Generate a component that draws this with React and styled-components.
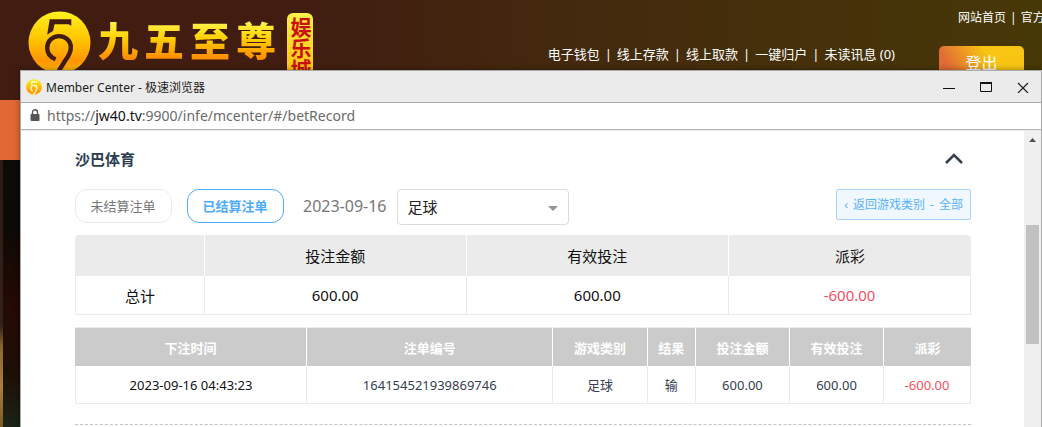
import React from 'react';
import styled, { createGlobalStyle, css } from 'styled-components';

const Global = createGlobalStyle`
  * { box-sizing: border-box; }
  body { margin: 0; font-family: "Noto Sans", "Noto Sans CJK SC", sans-serif; color: #222; }
  button, select { font: inherit; }
  a { color: inherit; text-decoration: none; }
`;

const Site = styled.div`
  position: relative;
  min-height: 100vh;
  overflow: hidden;
  background: #0d0805;
`;
const Header = styled.header`
  display: flex;
  justify-content: space-between;
  height: 100px;
  padding: 11px 0 0 28px;
  background: linear-gradient(90deg, #411d11 0%, #411d11 28%, #43280e 52%, #473807 100%);
`;
const Brand = styled.div`
  display: flex;
  align-items: flex-start;
`;
const BrandName = styled.h1`
  display: flex;
  gap: 6px;
  margin: 0 11px 0 7px;
  font-size: 40px;
  line-height: 60px;
  font-weight: 900;
  span {
    background: linear-gradient(#fff04a 20%, #ffd200 45%, #ff8a00 80%);
    background-clip: text;
    -webkit-background-clip: text;
    color: transparent;
  }
`;
const Seal = styled.div`
  height: 76px;
  margin-top: 2px;
  padding-top: 4px;
  border-radius: 6px;
  background: linear-gradient(#fff04a, #ffb400);
  color: #c8100c;
  font-size: 21px;
  line-height: 26px;
  font-weight: 700;
  writing-mode: vertical-rl;
`;
const HeaderSide = styled.div`
  display: flex;
  flex-direction: column;
  align-items: flex-end;
  color: #fff;
  white-space: nowrap;
`;
const TopLinks = styled.nav`
  display: flex;
  gap: 4px;
  width: 84px;
  height: 35px;
  font-size: 12px;
  line-height: 14px;
`;
const Account = styled.div`
  display: flex;
  align-items: flex-start;
  padding-right: 18px;
`;
const Menu = styled.nav`
  display: flex;
  gap: 5px;
  margin-right: 44px;
  font-size: 13px;
  line-height: 17px;
`;
const Logout = styled.button`
  width: 85px;
  height: 32px;
  padding: 0;
  border: 0;
  border-radius: 5px;
  background: linear-gradient(60deg, #e06a35 15%, #f8c512 60%);
  color: #fff;
  font-size: 16px;
`;
const Banner = styled.div`
  height: 60px;
  background: #e06935;
`;
const Scene = styled.div`
  display: flex;
  height: 267px;
  background: linear-gradient(#0d0b08 0%, #0d0906 25%, #260a04 55%, #1d0f06 80%, #1a2416 100%);
`;
const SceneEdge = styled.div`
  width: 3px;
  background: linear-gradient(#2a1b14 0%, #33221a 62%, #8a6630 70%, #a87f3a 85%, #7a5a22 100%);
`;

const Window = styled.section`
  position: absolute;
  inset: 70px 0 0 20px;
  display: flex;
  flex-direction: column;
  border: solid #a9a9a9;
  border-width: 1px 1px 0 1px;
  background: #fff;
  box-shadow: 0 0 6px rgba(0, 0, 0, 0.4);
`;
const TitleBar = styled.div`
  display: flex;
  align-items: center;
  height: 32px;
  padding: 0 6px 0 5px;
  border-bottom: 1px solid #ababab;
  background: #ebebeb;
  font-size: 12px;
`;
const WindowTitle = styled.span`
  flex: 1;
  margin-left: 4px;
`;
const WindowButton = styled.button`
  display: flex;
  align-items: center;
  justify-content: center;
  width: 24px;
  height: 24px;
  margin-left: 13px;
  padding: 0;
  border: 0;
  background: none;
`;
const AddressBar = styled.div`
  display: flex;
  align-items: center;
  gap: 7px;
  height: 27px;
  padding: 0 0 2px 9px;
  border-bottom: 1px solid #b5b5b5;
  color: #6b6b6b;
  font-size: 14px;
  b { color: #111; font-weight: 400; }
`;
const View = styled.div`
  display: flex;
  flex: 1;
  min-height: 0;
  border-top: 1px solid #ebebeb;
`;
const Content = styled.main`
  flex: 1;
  min-width: 0;
  padding: 14px 53px 0 54px;
  overflow: hidden;
`;
const ScrollTrack = styled.div`
  width: 17px;
  padding: 7px 2px 0;
  background: #f0f0f0;
  svg { display: block; margin: 0 auto; }
`;
const ScrollThumb = styled.div`
  height: 119px;
  margin-top: 83px;
  background: #c1c1c1;
`;

const SectionHead = styled.div`
  display: flex;
  align-items: center;
  justify-content: space-between;
  height: 26px;
  padding-right: 8px;
  h2 { margin: 0; color: #2c3e50; font-size: 15px; font-weight: 700; }
`;
const IconButton = styled.button`
  display: flex;
  padding: 0;
  border: 0;
  background: none;
`;
const Filters = styled.div`
  display: flex;
  align-items: flex-start;
  height: 36px;
  margin: 18px 0 10px;
`;
const Pill = styled.button`
  width: 97px;
  height: 34px;
  margin-right: 15px;
  padding: 0 1px 2px 0;
  border: 1px solid #ebebeb;
  border-radius: 12px;
  background: #fff;
  color: #777;
  font-size: 13px;
  ${(p) => p.$active && css`
    border-color: #4dacf8;
    color: #4dacf8;
    font-weight: 700;
  `}
`;
const DateText = styled.span`
  margin: 0 10px 0 4px;
  color: #777;
  font-size: 16px;
  line-height: 34px;
`;
const SelectBox = styled.label`
  display: grid;
  align-items: center;
  width: 172px;
  height: 36px;
  select, svg { grid-area: 1 / 1; }
  select {
    width: 100%;
    height: 36px;
    padding: 0 10px;
    border: 1px solid #dcdcdc;
    border-radius: 4px;
    appearance: none;
    background: #fff;
    color: #222;
    font-size: 15px;
  }
  svg { justify-self: end; margin: 3px 11px 0 0; pointer-events: none; }
`;
const BackLink = styled.a`
  display: flex;
  gap: 5px;
  margin-left: auto;
  padding: 0 7px;
  border: 1px solid #a9d3fb;
  border-radius: 2px;
  background: #f0f7ff;
  color: #58b4f8;
  font-size: 12px;
  line-height: 29px;
`;

const Table = styled.table`
  width: 100%;
  table-layout: fixed;
  border-collapse: separate;
  border-spacing: 0;
  text-align: center;
  th, td { padding: 0; border: 0 solid #ebebeb; }
  td { border-width: 0 1px 1px 0; }
  td:first-child { border-left-width: 1px; }
  th:not(:last-child) { border-right: 1px solid #fff; }
`;
const SummaryTable = styled(Table)`
  color: #111;
  font-size: 15px;
  th { height: 41px; background: #ebebeb; font-weight: 400; }
  td { height: 39px; }
  th:first-child { border-top-left-radius: 4px; }
  th:last-child { border-top-right-radius: 4px; }
`;
const BetTable = styled(Table)`
  margin-top: 12px;
  color: #34404f;
  font-size: 13px;
  th { height: 39px; border-top: 1px solid #ebebeb; background: #cbcbcb; color: #fff; font-weight: 700; }
  td { height: 38px; }
  td:first-child { color: #111; }
`;
const Loss = styled.span`
  color: #f7505f;
`;
const Divider = styled.hr`
  margin: 20px 0 0;
  border: 0;
  border-top: 1px dashed #c4c4c4;
`;

function Coin({ size }) {
  const id = `coin${size}`;
  const ink = size > 20 ? '#411d11' : '#fff';
  return (
    <svg width={size} height={size} viewBox="0 0 64 64" aria-hidden="true">
      <defs>
        <linearGradient id={id} x1="0" y1="0" x2="0" y2="1">
          <stop offset="0" stopColor="#fff21f" />
          <stop offset="0.45" stopColor="#ffc400" />
          <stop offset="0.8" stopColor="#ff9500" />
          <stop offset="1" stopColor="#ffc400" />
        </linearGradient>
      </defs>
      <circle cx="32" cy="32" r="31.5" fill={`url(#${id})`} />
      <path d="M22 8.5H44V15L41 13.5H27L25.5 20L19.5 24Z" fill={ink} />
      <path d="M28 49C22 46.500 19.500 42 19.500 37.500C19.500 30.500 25 25.500 31.500 25.500C38.500 25.500 43.500 30.500 43.500 37C43.500 42 41 46 38 50L30 63" fill="none" stroke={ink} strokeWidth="4.500" />
    </svg>
  );
}

const menu = ['电子钱包', '线上存款', '线上取款', '一键归户', '未读讯息 (0)'];
const betColumns = [
  ['下注时间', '25.9%'], ['注单编号', '27.5%'], ['游戏类别', '10.5%'], ['结果', '5.4%'],
  ['投注金额', '10.5%'], ['有效投注', '10.5%'], ['派彩', '9.7%'],
];

export default function App() {
  return (
    <Site>
      <Global />
      <Header>
        <Brand>
          <Coin size={63} />
          <BrandName>{[...'九五至尊'].map((c) => <span key={c}>{c}</span>)}</BrandName>
          <Seal>娱乐城</Seal>
        </Brand>
        <HeaderSide>
          <TopLinks><a href="#home">网站首页</a><span>|</span><a href="#official">官方</a></TopLinks>
          <Account>
            <Menu>
              {menu.map((m, i) => (
                <React.Fragment key={m}>
                  {i > 0 && <span>|</span>}
                  <a href={`#menu${i}`}>{m}</a>
                </React.Fragment>
              ))}
            </Menu>
            <Logout>登出</Logout>
          </Account>
        </HeaderSide>
      </Header>
      <Banner />
      <Scene><SceneEdge /></Scene>

      <Window>
        <TitleBar>
          <Coin size={16} />
          <WindowTitle>Member Center - 极速浏览器</WindowTitle>
          <WindowButton aria-label="最小化">
            <svg width="12" height="12"><path d="M0 7.5H12" stroke="#111" /></svg>
          </WindowButton>
          <WindowButton aria-label="最大化">
            <svg width="12" height="12"><path d="M.5 2V10.5H11.5V2" fill="none" stroke="#111" /><path d="M0 2H12" stroke="#111" strokeWidth="2" /></svg>
          </WindowButton>
          <WindowButton aria-label="关闭">
            <svg width="12" height="12"><path d="M1 2L11 12M11 2L1 12" stroke="#222" strokeWidth="1.2" /></svg>
          </WindowButton>
        </TitleBar>
        <AddressBar>
          <svg width="10" height="12" viewBox="0 0 10 12">
            <rect x="0.5" y="5" width="9" height="7" rx="1" fill="#555" />
            <path d="M2.5 5V3.2a2.5 2.5 0 0 1 5 0V5" fill="none" stroke="#555" strokeWidth="1.4" />
          </svg>
          <span>https://<b>jw40.tv</b>:9900/infe/mcenter/#/betRecord</span>
        </AddressBar>
        <View>
          <Content>
            <SectionHead>
              <h2>沙巴体育</h2>
              <IconButton aria-label="收起">
                <svg width="18" height="11"><path d="M1 10L9 2L17 10" fill="none" stroke="#34404f" strokeWidth="2.6" /></svg>
              </IconButton>
            </SectionHead>
            <Filters>
              <Pill>未结算注单</Pill>
              <Pill $active>已结算注单</Pill>
              <DateText>2023-09-16</DateText>
              <SelectBox>
                <select aria-label="游戏类别" defaultValue="足球"><option>足球</option></select>
                <svg width="10" height="5"><path d="M0 0H10L5 5Z" fill="#949494" /></svg>
              </SelectBox>
              <BackLink href="#all"><span>‹</span><span>返回游戏类别</span><span>-</span><span>全部</span></BackLink>
            </Filters>
            <SummaryTable>
              <colgroup>
                <col style={{ width: '14.5%' }} /><col style={{ width: '29.2%' }} />
                <col style={{ width: '29.3%' }} /><col style={{ width: '27%' }} />
              </colgroup>
              <thead><tr><th /><th>投注金额</th><th>有效投注</th><th>派彩</th></tr></thead>
              <tbody><tr><td>总计</td><td>600.00</td><td>600.00</td><td><Loss>-600.00</Loss></td></tr></tbody>
            </SummaryTable>
            <BetTable>
              <colgroup>{betColumns.map(([n, w]) => <col key={n} style={{ width: w }} />)}</colgroup>
              <thead><tr>{betColumns.map(([n]) => <th key={n}>{n}</th>)}</tr></thead>
              <tbody>
                <tr>
                  <td>2023-09-16 04:43:23</td><td>164154521939869746</td><td>足球</td><td>输</td>
                  <td>600.00</td><td>600.00</td><td><Loss>-600.00</Loss></td>
                </tr>
              </tbody>
            </BetTable>
            <Divider />
          </Content>
          <ScrollTrack>
            <svg width="7" height="4"><path d="M0 4L3.5 0L7 4Z" fill="#505050" /></svg>
            <ScrollThumb />
          </ScrollTrack>
        </View>
      </Window>
    </Site>
  );
}
